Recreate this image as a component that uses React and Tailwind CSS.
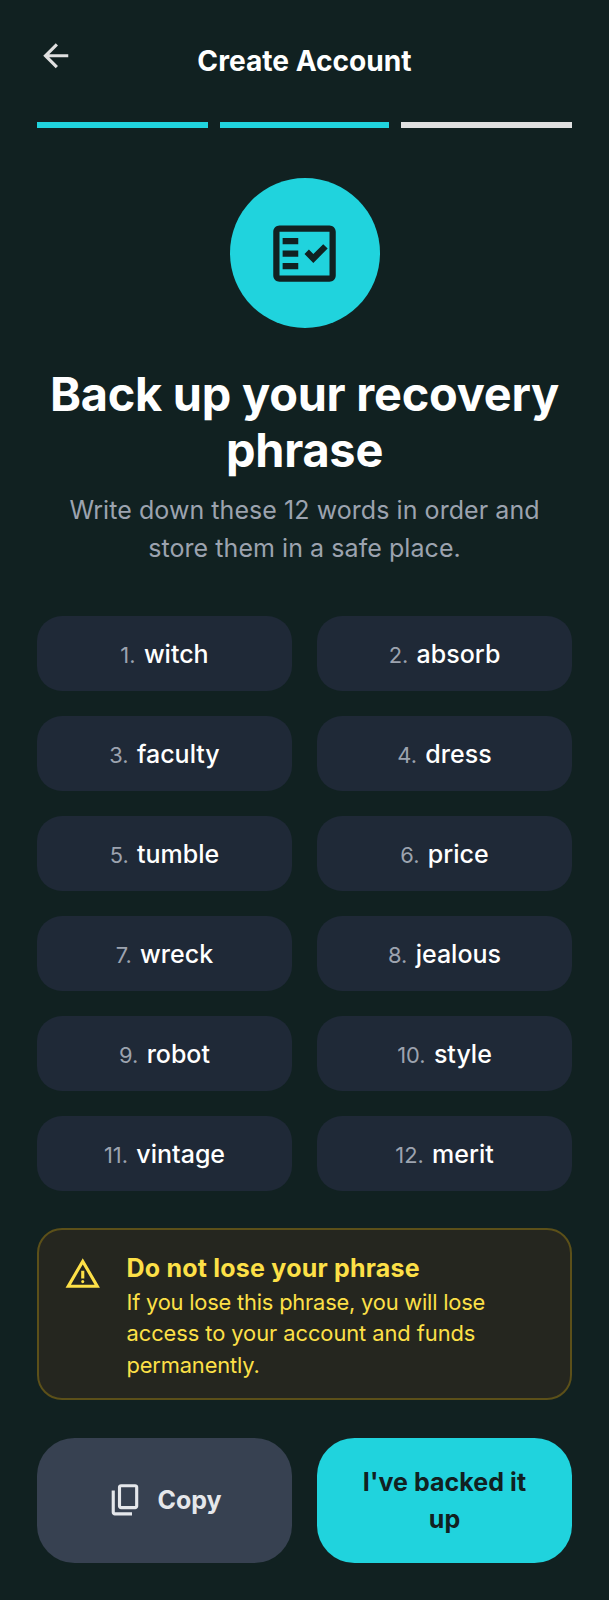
import React from "react";

const WORDS = [
  "witch", "absorb", "faculty", "dress", "tumble", "price",
  "wreck", "jealous", "robot", "style", "vintage", "merit",
];

function Symbol({ d, className }) {
  return (
    <svg viewBox="0 -960 960 960" fill="currentColor" className={className} aria-hidden="true">
      <path d={d} />
    </svg>
  );
}

const ARROW = "m313-440 224 224-57 56-320-320 320-320 57 56-224 224h487v80H313Z";
const WARNING =
  "m40-120 440-760 440 760H40Zm138-80h604L480-720 178-200Zm302-40q17 0 28.5-11.5T520-280q0-17-11.5-28.5T480-320q-17 0-28.5 11.5T440-280q0 17 11.5 28.5T480-240Zm-40-120h80v-200h-80v200Z";
const COPY =
  "M360-240q-33 0-56.5-23.5T280-320v-480q0-33 23.5-56.5T360-880h360q33 0 56.5 23.5T800-800v480q0 33-23.5 56.5T720-240H360Zm0-80h360v-480H360v480ZM200-80q-33 0-56.5-23.5T120-160v-560h80v560h440v80H200Z";

function Header() {
  return (
    <header className="grid h-[47px] grid-cols-[37.5px_1fr_37.5px] items-start">
      <button type="button" aria-label="Back" className="text-[#e0e0e0]">
        <Symbol d={ARROW} className="size-[37.5px]" />
      </button>
      <h1 className="pt-[7px] text-center text-[28.125px] leading-[35.2px] font-bold text-white">
        Create Account
      </h1>
    </header>
  );
}

function Progress() {
  return (
    <div className="mt-[38px] grid grid-cols-[171px_1fr_171px] gap-[12px]">
      <div className="h-[6px] bg-[#20d3dd]" />
      <div className="h-[6px] bg-[#20d3dd]" />
      <div className="h-[6px] bg-[#e0e0e0]" />
    </div>
  );
}

function Hero() {
  return (
    <section className="mt-[50px] flex flex-col items-center text-center">
      <div className="flex size-[150px] items-center justify-center rounded-full bg-[#20d3dd] text-[#112121]">
        <svg viewBox="0 0 24 24" fill="currentColor" className="size-[75px]" aria-hidden="true">
          <path
            fillRule="evenodd"
            d="M20 3H4c-1.1 0-2 .9-2 2v14c0 1.1.9 2 2 2h16c1.1 0 2-.9 2-2V5c0-1.1-.9-2-2-2zm0 16H4V5h16v14z"
          />
          <path d="M19.41 10.42 17.99 9l-3.17 3.17-1.41-1.42L12 12.16 14.82 15zM5 7h5v2H5zM5 11h5v2H5zM5 15h5v2H5z" />
        </svg>
      </div>
      <h2 className="mt-[37.5px] text-[46.875px] leading-[56.25px] font-bold tracking-[-0.22px] text-white">
        Back up your recovery phrase
      </h2>
      <p className="mt-[14px] px-[25px] text-[25px] leading-[37.5px] tracking-[0.06px] text-[#9ca3af]">
        Write down these 12 words in order and store them in a safe place.
      </p>
    </section>
  );
}

function WordGrid() {
  return (
    <ol className="mt-[48.5px] grid grid-cols-2 gap-[25px]">
      {WORDS.map((word, i) => (
        <li
          key={word}
          className="flex h-[75px] items-baseline justify-center gap-[8.3px] rounded-[25px] bg-[#1f2937] pt-[20.25px] leading-[37.5px]"
        >
          <span className="text-[21.875px] text-[#9ca3af]">{i + 1}.</span>
          <span className="text-[25px] font-medium text-white">{word}</span>
        </li>
      ))}
    </ol>
  );
}

function Notice() {
  return (
    <div className="mt-[37.5px] flex h-[172px] items-start gap-[25px] rounded-[25px] border-[2px] border-[#5c5019] bg-[#25261f] px-[25px] pt-[18.5px] text-[#fde047]">
      <Symbol d={WARNING} className="mt-[6px] size-[37.5px] shrink-0" />
      <div className="pt-[1px]">
        <h3 className="text-[25px] leading-[37.5px] font-bold tracking-[0.22px]">
          Do not lose your phrase
        </h3>
        <p className="text-[21.875px] leading-[31.25px]">
          <span className="block tracking-[-0.2px]">If you lose this phrase, you will lose</span>
          <span className="block tracking-[-0.06px]">access to your account and funds</span>
          <span className="block tracking-[-0.15px]">permanently.</span>
        </p>
      </div>
    </div>
  );
}

function Actions() {
  return (
    <div className="mt-[37.5px] grid grid-cols-2 gap-[25px] text-[25px] leading-[37.5px] font-bold">
      <button
        type="button"
        className="flex h-[125px] items-center justify-center gap-[12.5px] rounded-[37.5px] bg-[#374151] text-[#e5e7eb]"
      >
        <Symbol d={COPY} className="size-[37.5px]" />
        <span className="pt-[2px]">Copy</span>
      </button>
      <button
        type="button"
        className="flex h-[125px] items-center justify-center rounded-[37.5px] bg-[#20d3dd] px-[37.5px] pt-[2px] tracking-[0.06px] text-[#112121]"
      >
        I've backed it up
      </button>
    </div>
  );
}

export default function App() {
  return (
    <main className="flex min-h-[1600px] w-full flex-col bg-[#112121] px-[37px] pt-[37px] font-['Inter',sans-serif]">
      <Header />
      <Progress />
      <Hero />
      <WordGrid />
      <Notice />
      <Actions />
    </main>
  );
}
